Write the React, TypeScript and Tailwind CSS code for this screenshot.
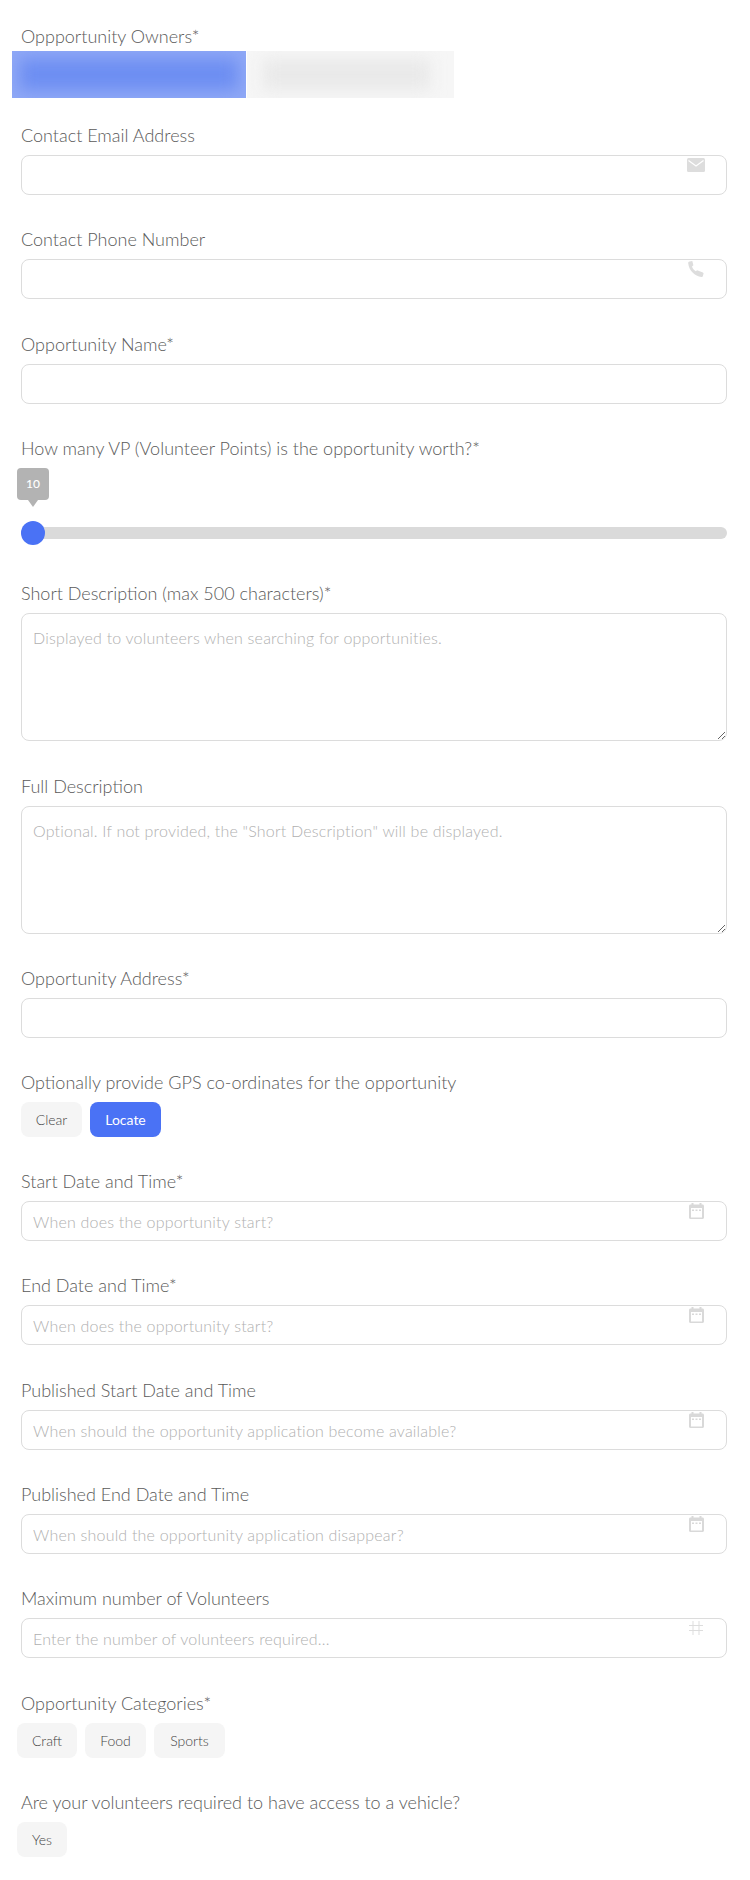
const LATO = "font-['Lato','Noto_Sans',sans-serif]";

function MailIcon() {
  return (
    <svg viewBox="0 0 18 14" className="w-[18px] h-[14px]" fill="#dddddd">
      <rect width="18" height="14" rx="1.5" />
      <path d="M1.5 2.5 9 8l7.500-5.500" fill="none" stroke="#ffffff" strokeWidth="1.2" />
    </svg>
  );
}

function PhoneIcon() {
  return (
    <svg viewBox="0 0 16 16" className="w-4 h-4 -mt-px" fill="#dddddd">
      <path d="M1.500.4 4.300 0l1.100 4.300-1.400 1.200c.6 2 1.900 3.700 3.800 4.800l1.300-1.100 5.800 2.200c.6.300.8.800.6 1.400l-.7 2.400c-.2.600-.6.900-1.300.8C6.800 15.300 1 9.500.2 2.200.1 1.200.6.500 1.500.4z" />
    </svg>
  );
}

function CalendarIcon() {
  return (
    <svg viewBox="0 0 15 16" className="w-[15px] h-4 -mt-px">
      <path d="M2.500 0h2v1.500h6V0h2v1.500h1c.8 0 1.500.7 1.500 1.500v11.500c0 .8-.7 1.500-1.500 1.500h-12C.7 16 0 15.300 0 14.500V3c0-.8.7-1.500 1.500-1.500h1z" fill="#d9d9d9" />
      <rect x="2" y="5" width="11" height="9.500" fill="#ffffff" />
      <path d="M3 6.500h2v1.500H3zM6.500 6.500h2v1.500h-2zM10 6.500h2v1.500h-2z" fill="#d9d9d9" />
    </svg>
  );
}

function HashIcon() {
  return (
    <svg viewBox="0 0 14 14" className="w-3.5 h-3.5" fill="none" stroke="#dddddd" strokeWidth="1">
      <path d="M4 0v14M10 0v14M0 4.500h14M0 9.500h14" />
    </svg>
  );
}

function Label({ children }: { children: React.ReactNode }) {
  return <label className="block text-[18px] leading-[27px] font-light text-[#5a5a5a] mb-1.5">{children}</label>;
}

function Field({
  label,
  placeholder,
  icon,
}: {
  label: string;
  placeholder?: string;
  icon?: React.ReactNode;
}) {
  return (
    <div className="mb-[31.4px]">
      <Label>{label}</Label>
      <div className="relative">
        <input
          placeholder={placeholder}
          className="block w-full h-10 pl-[11px] pr-3 pt-px rounded-lg border border-[#dcdcdc] bg-white text-[16px] font-light tracking-[0.2px] outline-none placeholder:text-[#b0b0b0]"
        />
        {icon && <span className="absolute right-[22px] top-[3px] w-[18px] flex justify-center">{icon}</span>}
      </div>
    </div>
  );
}

function AreaField({ label, placeholder }: { label: string; placeholder: string }) {
  return (
    <div className="mb-[31.4px]">
      <Label>{label}</Label>
      <textarea
        placeholder={placeholder}
        className="block w-full h-32 pl-[11px] pr-3 pt-[13px] pb-3 rounded-lg border border-[#dcdcdc] bg-white text-[16px] font-light leading-[22px] tracking-[0.2px] outline-none placeholder:text-[#b0b0b0]"
      />
    </div>
  );
}

function Chip({ children, primary, width }: { children: React.ReactNode; primary?: boolean; width?: string }) {
  return (
    <button
      className={
        primary
          ? "h-[35px] w-[71px] rounded-lg bg-[#4a72f5] text-white text-[14px]"
          : `h-[35px] ${width} rounded-lg bg-[#f5f5f5] text-[#444444] text-[14px] font-light`
      }
    >
      {children}
    </button>
  );
}

export default function App() {
  return (
    <div className={`${LATO} w-[750px] min-h-[1880px] bg-white pt-[23px] pl-[21px] pr-[23px]`}>
      <label className="block text-[18px] leading-[27px] font-light text-[#5a5a5a] mb-px">Oppportunity Owners*</label>
      {/* blurred-out owner names */}
      <div className="flex -ml-[9px] mb-6 gap-px">
        <div className="w-[234px] h-[47px] overflow-hidden bg-[#8fa8f6]">
          <div className="m-2 h-[31px] bg-[#6d8ef2] blur-[8px]" />
        </div>
        <div className="w-[207px] h-[47px] overflow-hidden bg-[#f6f6f6]">
          <div className="my-2 ml-4 mr-6 h-[31px] bg-[#e9e9e9] blur-[8px]" />
        </div>
      </div>

      <Field label="Contact Email Address" icon={<MailIcon />} />
      <Field label="Contact Phone Number" icon={<PhoneIcon />} />
      <Field label="Opportunity Name*" />

      <div className="mb-[35px]">
        <label className="block text-[18px] leading-[27px] font-light text-[#5a5a5a] mb-1.5">
          How many VP (Volunteer Points) is the opportunity worth?*
        </label>
        <div className="relative -ml-1 w-8 h-8 rounded bg-[#b3b3b3] flex items-center justify-center text-white text-[12px] font-medium">
          10
          <span className="absolute -bottom-[7px] left-[11px] border-x-[5px] border-x-transparent border-t-[7px] border-t-[#b3b3b3]" />
        </div>
        <div className="relative mt-[21px] h-6 flex items-center">
          <div className="w-full h-3 rounded-md bg-[#dadada]" />
          <div className="absolute left-0 top-0 w-6 h-6 rounded-full bg-[#4a72f5]" />
        </div>
      </div>

      <AreaField label="Short Description (max 500 characters)*" placeholder="Displayed to volunteers when searching for opportunities." />
      <AreaField label="Full Description" placeholder={'Optional. If not provided, the "Short Description" will be displayed.'} />
      <Field label="Opportunity Address*" />

      <div className="mb-[30.4px]">
        <Label>Optionally provide GPS co-ordinates for the opportunity</Label>
        <div className="flex gap-2">
          <Chip width="w-[61px]">Clear</Chip>
          <Chip primary>Locate</Chip>
        </div>
      </div>

      <Field label="Start Date and Time*" placeholder="When does the opportunity start?" icon={<CalendarIcon />} />
      <Field label="End Date and Time*" placeholder="When does the opportunity start?" icon={<CalendarIcon />} />
      <Field label="Published Start Date and Time" placeholder="When should the opportunity application become available?" icon={<CalendarIcon />} />
      <Field label="Published End Date and Time" placeholder="When should the opportunity application disappear?" icon={<CalendarIcon />} />
      <Field label="Maximum number of Volunteers" placeholder="Enter the number of volunteers required..." icon={<HashIcon />} />

      <div className="mb-[31.4px]">
        <Label>Opportunity Categories*</Label>
        <div className="flex gap-2 -ml-1">
          <Chip width="w-[60px]">Craft</Chip>
          <Chip width="w-[61px]">Food</Chip>
          <Chip width="w-[71px]">Sports</Chip>
        </div>
      </div>

      <div>
        <Label>Are your volunteers required to have access to a vehicle?</Label>
        <div className="flex -ml-1">
          <Chip width="w-[50px]">Yes</Chip>
        </div>
      </div>
    </div>
  );
}
